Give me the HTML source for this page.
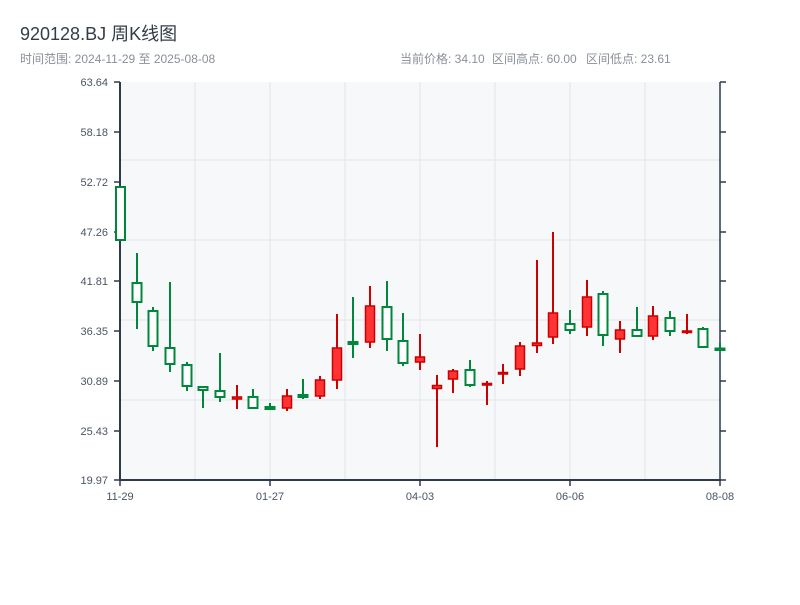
<!DOCTYPE html>
<html><head><meta charset="utf-8"><style>
body{margin:0;background:#fff;width:800px;height:600px;overflow:hidden;font-family:"Liberation Sans","Noto Sans CJK SC",sans-serif}
</style></head><body>
<svg width="800" height="600" xmlns="http://www.w3.org/2000/svg" font-family="Liberation Sans, Noto Sans CJK SC, sans-serif">
<text x="20" y="40" font-size="18" fill="#333d47">920128.BJ 周K线图</text>
<text x="20" y="63" font-size="12" fill="#8a9099">时间范围: 2024-11-29 至 2025-08-08</text>
<text x="400" y="63" font-size="12" fill="#8a9099">当前价格: 34.10</text>
<text x="492" y="63" font-size="12" fill="#8a9099">区间高点: 60.00</text>
<text x="586" y="63" font-size="12" fill="#8a9099">区间低点: 23.61</text>
<rect x="120" y="82" width="600" height="398" fill="#f7f8fa"/>
<g stroke="#e2e5ea" stroke-width="1">
<line x1="120" y1="160" x2="720" y2="160"/><line x1="120" y1="240" x2="720" y2="240"/><line x1="120" y1="320" x2="720" y2="320"/><line x1="120" y1="400" x2="720" y2="400"/>
<line x1="195" y1="82" x2="195" y2="480"/><line x1="270" y1="82" x2="270" y2="480"/><line x1="345" y1="82" x2="345" y2="480"/><line x1="420" y1="82" x2="420" y2="480"/><line x1="495" y1="82" x2="495" y2="480"/><line x1="570" y1="82" x2="570" y2="480"/><line x1="645" y1="82" x2="645" y2="480"/>
</g>
<g stroke="#2c3a4b" stroke-width="1.5">
<line x1="120" y1="82" x2="120" y2="481" stroke-width="2"/><line x1="720" y1="82" x2="720" y2="481"/><line x1="119" y1="480" x2="721" y2="480" stroke-width="2"/>
<line x1="114" y1="82" x2="120" y2="82"/><line x1="114" y1="132" x2="120" y2="132"/><line x1="114" y1="182" x2="120" y2="182"/><line x1="114" y1="232" x2="120" y2="232"/><line x1="114" y1="281" x2="120" y2="281"/><line x1="114" y1="331" x2="120" y2="331"/><line x1="114" y1="381" x2="120" y2="381"/><line x1="114" y1="431" x2="120" y2="431"/><line x1="114" y1="480" x2="120" y2="480"/>
<line x1="720" y1="82" x2="726" y2="82"/><line x1="720" y1="132" x2="726" y2="132"/><line x1="720" y1="182" x2="726" y2="182"/><line x1="720" y1="232" x2="726" y2="232"/><line x1="720" y1="281" x2="726" y2="281"/><line x1="720" y1="331" x2="726" y2="331"/><line x1="720" y1="381" x2="726" y2="381"/><line x1="720" y1="431" x2="726" y2="431"/><line x1="720" y1="480" x2="726" y2="480"/>
<line x1="120" y1="480" x2="120" y2="486"/><line x1="270" y1="480" x2="270" y2="486"/><line x1="420" y1="480" x2="420" y2="486"/><line x1="570" y1="480" x2="570" y2="486"/><line x1="720" y1="480" x2="720" y2="486"/>
</g>
<g font-size="11" fill="#4a5563" text-anchor="end">
<text x="108" y="86">63.64</text><text x="108" y="136">58.18</text><text x="108" y="186">52.72</text><text x="108" y="236">47.26</text><text x="108" y="285">41.81</text><text x="108" y="335">36.35</text><text x="108" y="385">30.89</text><text x="108" y="435">25.43</text><text x="108" y="484">19.97</text>
</g>
<g font-size="11" fill="#4a5563" text-anchor="middle">
<text x="120" y="500">11-29</text><text x="270" y="500">01-27</text><text x="420" y="500">04-03</text><text x="570" y="500">06-06</text><text x="720" y="500">08-08</text>
</g>
<g stroke="#00873c" stroke-width="2" fill="#fff">
<line x1="120" y1="187" x2="120" y2="240"/><rect x="116" y="187" width="9" height="53"/>
<line x1="137" y1="253" x2="137" y2="329"/><rect x="132.5" y="283" width="9" height="19"/>
<line x1="153" y1="307" x2="153" y2="351"/><rect x="148.5" y="311" width="9" height="35"/>
<line x1="170" y1="282" x2="170" y2="372"/><rect x="165.5" y="348" width="9" height="16"/>
<line x1="187" y1="362" x2="187" y2="391"/><rect x="182.5" y="365" width="9" height="21"/>
<line x1="203" y1="387" x2="203" y2="408"/><rect x="198.5" y="387" width="9" height="3"/>
<line x1="220" y1="353" x2="220" y2="402"/><rect x="215.5" y="391" width="9" height="6"/>
<line x1="253" y1="389" x2="253" y2="409"/><rect x="248.5" y="397" width="9" height="11"/>
<line x1="270" y1="403" x2="270" y2="409"/><rect x="265.5" y="407" width="9" height="2"/>
<line x1="303" y1="379" x2="303" y2="399"/><rect x="298.5" y="395" width="9" height="2"/>
<line x1="353" y1="297" x2="353" y2="358"/><rect x="348.5" y="342" width="9" height="2"/>
<line x1="387" y1="281" x2="387" y2="351"/><rect x="382.5" y="307" width="9" height="32"/>
<line x1="403" y1="313" x2="403" y2="366"/><rect x="398.5" y="341" width="9" height="22"/>
<line x1="470" y1="360" x2="470" y2="387"/><rect x="465.5" y="370" width="9" height="15"/>
<line x1="570" y1="310" x2="570" y2="334"/><rect x="565.5" y="324" width="9" height="6"/>
<line x1="603" y1="291" x2="603" y2="346"/><rect x="598.5" y="294" width="9" height="41"/>
<line x1="637" y1="307" x2="637" y2="336"/><rect x="632.5" y="330" width="9" height="6"/>
<line x1="670" y1="311" x2="670" y2="336"/><rect x="665.5" y="318" width="9" height="13"/>
<line x1="703" y1="327" x2="703" y2="348"/><rect x="698.5" y="329" width="9" height="18"/>
<line x1="720" y1="343" x2="720" y2="350"/><rect x="715.5" y="348.5" width="9" height="1.5"/>
</g>
<g stroke="#cc0000" stroke-width="1.5" fill="#ff3333">
<line x1="237" y1="385" x2="237" y2="409" stroke-width="2"/><rect x="232.5" y="397" width="9" height="2"/>
<line x1="287" y1="389" x2="287" y2="411" stroke-width="2"/><rect x="282.5" y="396" width="9" height="12"/>
<line x1="320" y1="376" x2="320" y2="399" stroke-width="2"/><rect x="315.5" y="380" width="9" height="16"/>
<line x1="337" y1="314" x2="337" y2="389" stroke-width="2"/><rect x="332.5" y="348" width="9" height="32"/>
<line x1="370" y1="286" x2="370" y2="348" stroke-width="2"/><rect x="365.5" y="306" width="9" height="36"/>
<line x1="420" y1="334" x2="420" y2="370" stroke-width="2"/><rect x="415.5" y="357" width="9" height="5"/>
<line x1="437" y1="375" x2="437" y2="447" stroke-width="2"/><rect x="432.5" y="385.5" width="9" height="3"/>
<line x1="453" y1="369" x2="453" y2="393" stroke-width="2"/><rect x="448.5" y="371" width="9" height="8"/>
<line x1="487" y1="381" x2="487" y2="405" stroke-width="2"/><rect x="482.5" y="383.5" width="9" height="1.5"/>
<line x1="503" y1="364" x2="503" y2="384" stroke-width="2"/><rect x="498.5" y="372.5" width="9" height="1.5"/>
<line x1="520" y1="342" x2="520" y2="376" stroke-width="2"/><rect x="515.5" y="346" width="9" height="23"/>
<line x1="537" y1="260" x2="537" y2="353" stroke-width="2"/><rect x="532.5" y="343" width="9" height="2.5"/>
<line x1="553" y1="232" x2="553" y2="344" stroke-width="2"/><rect x="548.5" y="313" width="9" height="24"/>
<line x1="587" y1="280" x2="587" y2="336" stroke-width="2"/><rect x="582.5" y="297" width="9" height="30"/>
<line x1="620" y1="321" x2="620" y2="353" stroke-width="2"/><rect x="615.5" y="330" width="9" height="9"/>
<line x1="653" y1="306" x2="653" y2="340" stroke-width="2"/><rect x="648.5" y="316" width="9" height="20"/>
<line x1="687" y1="314" x2="687" y2="334" stroke-width="2"/><rect x="682.5" y="331" width="9" height="1.5"/>
</g>
</svg>
</body></html>
